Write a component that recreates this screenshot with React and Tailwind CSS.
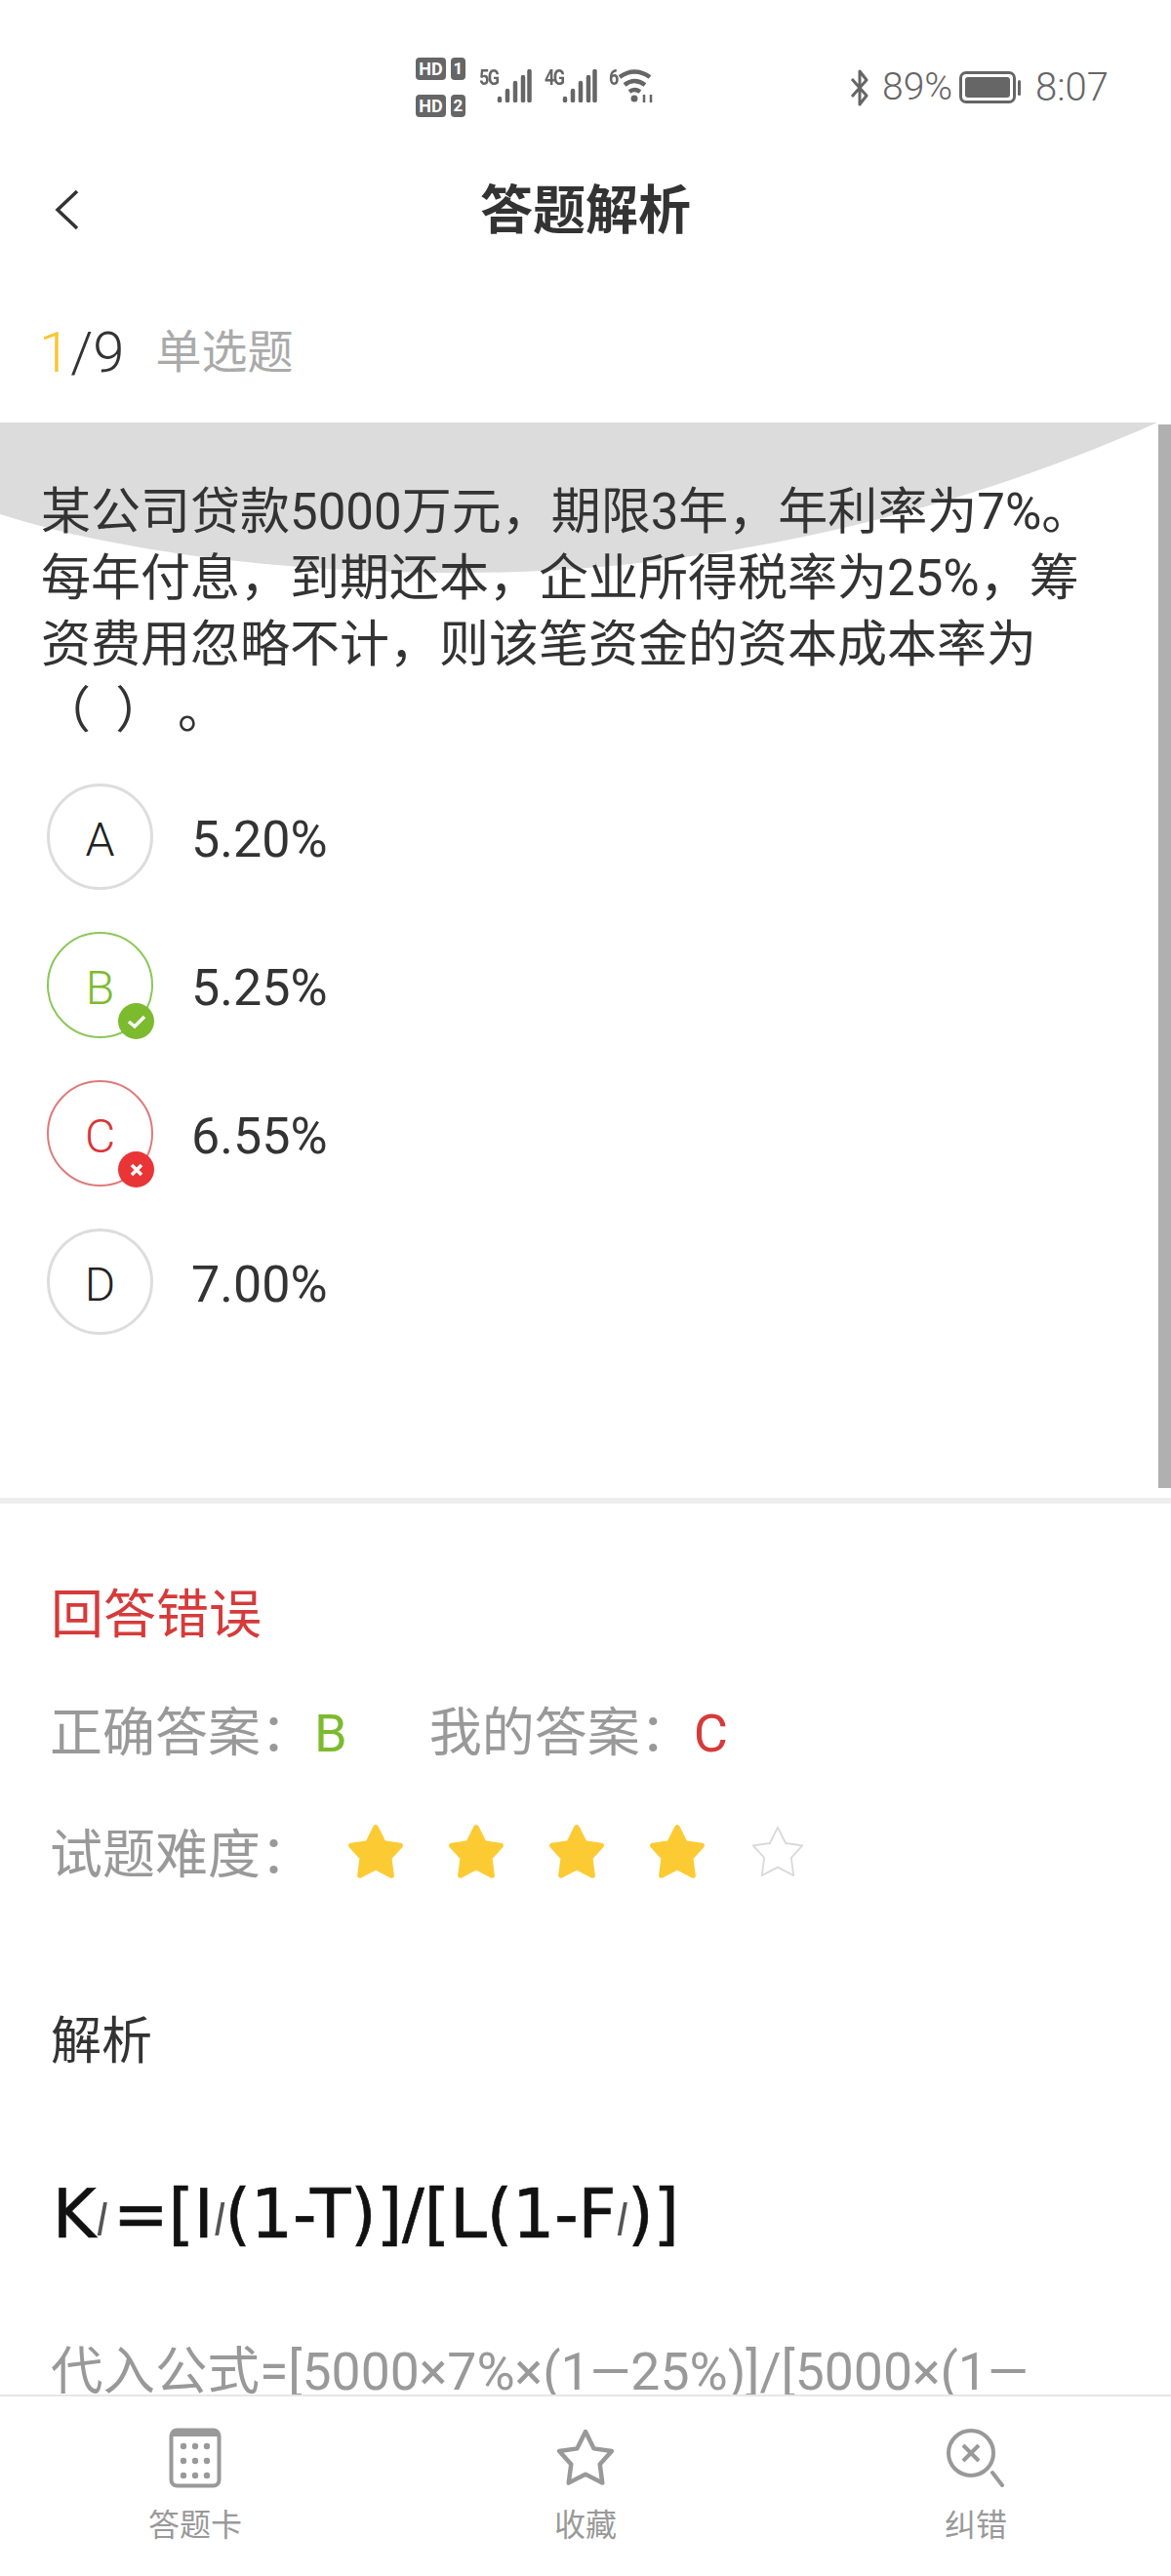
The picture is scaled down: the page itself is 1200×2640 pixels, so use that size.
const CJK = `font-['Roboto','Noto_Sans_CJK_SC',sans-serif]`;

const STAR = "M50 8 L63.5 35 L92 39 L73 60 L77 90 L50 76 L23 90 L27 60 L8 39 L36.5 35 Z";

function Star({ filled }) {
  return (
    <svg width="60" height="60" viewBox="0 0 100 100">
      <path
        d={STAR}
        fill={filled ? "#fccb33" : "#fff"}
        stroke={filled ? "#fccb33" : "#d8d8d8"}
        strokeWidth={filled ? 9 : 3}
        strokeLinejoin="round"
      />
    </svg>
  );
}

function Bars({ w = 36, h = 34 }) {
  return (
    <svg width={w} height={h} viewBox="0 0 36 34">
      <g stroke="#666" strokeWidth="4.5" strokeLinecap="round">
        <path d="M3 30v2" />
        <path d="M11 22v10" />
        <path d="M19 14v18" />
        <path d="M27 8v24" />
        <path d="M33.5 2v30" />
      </g>
    </svg>
  );
}

function HdRow({ n }) {
  return (
    <div className="flex items-center gap-[5px]">
      <span className="w-[31px] h-[23px] rounded-[4px] bg-[#666] text-white text-[18px] font-bold leading-[23px] text-center">HD</span>
      <span className="w-[15px] h-[23px] rounded-[4px] bg-[#666] text-white text-[17px] font-bold leading-[23px] text-center">{n}</span>
    </div>
  );
}

function StatusBar() {
  return (
    <div className="h-[176px] flex items-center pl-[426px] pt-[3px] text-[#666] font-['Roboto',sans-serif]">
      <div className="flex flex-col gap-[15px]">
        <HdRow n="1" />
        <HdRow n="2" />
      </div>
      <div className="flex items-end ml-[14px] mt-[-4px]">
        <span className="text-[18px] font-bold leading-none mb-[17px] w-[18px] tracking-[-1.5px] scale-y-125">5G</span>
        <Bars />
      </div>
      <div className="flex items-end ml-[13px] mt-[-4px]">
        <span className="text-[18px] font-bold leading-none mb-[17px] w-[18px] tracking-[-1.5px] scale-y-125">4G</span>
        <Bars />
      </div>
      <div className="flex items-start ml-[12px] mt-[-4px]">
        <span className="text-[18px] font-bold leading-none w-[10px] scale-y-125">6</span>
        <svg width="38" height="36" viewBox="0 0 38 36" fill="none" stroke="#666" strokeWidth="4.5">
          <path d="M1 9 Q16 -2 32 9" />
          <path d="M6 17 Q16 9 27 17" />
          <path d="M11 24 Q16 20 22 24" />
          <circle cx="16" cy="31" r="3.5" fill="#666" stroke="none" />
          <path d="M26 27v8M33 27v8" strokeWidth="2.5" />
        </svg>
      </div>
      <svg className="ml-[199px]" width="20" height="38" viewBox="0 0 20 38" fill="none" stroke="#666" strokeWidth="3" strokeLinejoin="round">
        <path d="M2 10 L17 27 L10 36 V2 L17 11 L2 28" />
      </svg>
      <span className="ml-[13px] text-[39px] font-light leading-none w-[72px]">89%</span>
      <div className="ml-[7px] w-[58px] h-[33px] rounded-[7px] border-[3px] border-[#666] p-[3px]">
        <div className="w-full h-full rounded-[3px] bg-[#666]" />
      </div>
      <div className="ml-[2px] w-[3px] h-[16px] rounded-full bg-[#666]" />
      <span className="ml-[15px] text-[40px] font-light leading-none">8:07</span>
    </div>
  );
}

function Option({ letter, text, state }) {
  const ring = state === "right" ? "border-[#8cc75a] border-[2px] text-[#7cbb2e]" : state === "wrong" ? "border-[#e07a7a] border-[2px] text-[#d93636]" : "border-[#dddddd] border-[3px] text-[#222]";
  return (
    <div className="flex items-center h-[109px]">
      <div className={`relative w-[109px] h-[109px] rounded-full flex items-center justify-center pt-[6px] text-[48px] font-light ${ring}`}>
        {letter}
        {state === "right" && (
          <span className="absolute right-[-3px] bottom-[-3px] w-[37px] h-[37px] rounded-full bg-[#7cbb2e] flex items-center justify-center">
            <svg width="20" height="16" viewBox="0 0 20 16" fill="none" stroke="#fff" strokeWidth="3.5"><path d="M2 8l6 5L18 3" /></svg>
          </span>
        )}
        {state === "wrong" && (
          <span className="absolute right-[-3px] bottom-[-3px] w-[37px] h-[37px] rounded-full bg-[#e93535] flex items-center justify-center">
            <svg width="14" height="14" viewBox="0 0 14 14" fill="none" stroke="#fff" strokeWidth="3.5"><path d="M2 2l10 10M12 2L2 12" /></svg>
          </span>
        )}
      </div>
      <span className="ml-[39px] pt-[6px] text-[52px] font-normal text-[#333]">{text}</span>
    </div>
  );
}

function Formula() {
  const sub = <i className="text-[44px] font-normal self-end leading-[64px] text-[#555] [-webkit-text-stroke:0px]">l</i>;
  return (
    <div className="flex items-center ml-[2px] h-[78px] text-[70px] leading-none text-[#111] [-webkit-text-stroke:0.7px_#111] font-['DejaVu_Sans',sans-serif] blur-[0.6px] scale-x-[0.965] origin-left">
      <span>K</span>{sub}<span className="ml-[6px]">=[I</span>{sub}<span>(1-T)]/[L(1-F</span>{sub}<span>)]</span>
    </div>
  );
}

function TabLabel({ children }) {
  return <span className="text-[32px] leading-none text-[#999] mt-[22px]">{children}</span>;
}

export default function App() {
  return (
    <div className={`w-[1200px] h-[2640px] bg-white flex flex-col overflow-hidden ${CJK}`}>
      <StatusBar />

      <div className="relative h-[78px] flex items-center justify-center shrink-0">
        <svg className="absolute left-[56px] top-[18px]" width="26" height="42" viewBox="0 0 26 42" fill="none" stroke="#333" strokeWidth="3.5">
          <path d="M23 2L3 21l20 19" />
        </svg>
        <span className="text-[54px] font-bold text-[#333] leading-none mt-[3px]">答题解析</span>
      </div>

      <div className="h-[179px] flex items-center pl-[40px] shrink-0">
        <div className="flex items-center mt-[34px]">
          <span className="text-[58px] font-light text-[#333] leading-none"><span className="text-[#fbc531]">1</span>/9</span>
          <span className="ml-[32px] text-[47px] text-[#aaa] leading-none">单选题</span>
        </div>
      </div>

      <div className="relative flex-1 min-h-0 overflow-hidden">
        <svg className="absolute left-0 top-0" width="1186" height="160" viewBox="0 0 1186 160">
          <path d="M0 0 H1186 C950 105 700 154 475 154 C300 154 130 135 0 94 Z" fill="#dcdcdc" />
        </svg>
        <div className="absolute right-0 top-[2px] w-[13px] h-[1090px] bg-[#b0b0b0]" />

        <div className="relative pt-[58px]">
          <p className="px-[42px] text-[51px] leading-[68px] text-[#333] whitespace-nowrap">
            某公司贷款5000万元，期限3年，年利率为7%。<br />
            每年付息，到期还本，企业所得税率为25%，筹<br />
            资费用忽略不计，则该笔资金的资本成本率为<br />
            （&nbsp;&nbsp;）&nbsp;。
          </p>

          <div className="mt-[40px] pl-[48px] flex flex-col gap-[43px]">
            <Option letter="A" text="5.20%" />
            <Option letter="B" text="5.25%" state="right" />
            <Option letter="C" text="6.55%" state="wrong" />
            <Option letter="D" text="7.00%" />
          </div>

          <div className="mt-[167px] h-[6px] bg-[#eeeeee]" />

          <div className="pl-[52px]">
            <div className="mt-[83px] text-[54px] leading-[64px] text-[#d63a3a]">回答错误</div>

            <div className="mt-[57px] flex items-center text-[54px] leading-[64px] text-[#999]">
              <span className="-ml-[1px]">正确答案：</span>
              <span className="text-[#7cbb2e] ml-[1px]">B</span>
              <span className="ml-[84px]">我的答案：</span>
              <span className="text-[#d63a3a] ml-[1px]">C</span>
            </div>

            <div className="mt-[61px] flex items-center text-[54px] leading-[64px] text-[#999]">
              <span className="w-[304px] -ml-[1px]">试题难度：</span>
              <div className="flex gap-[43px] mt-[-8px]">
                <Star filled />
                <Star filled />
                <Star filled />
                <Star filled />
                <Star />
              </div>
            </div>

            <div className="mt-[127px] text-[52px] leading-[64px] text-[#333]">解析</div>

            <div className="mt-[105px]">
              <Formula />
            </div>

            <div className="mt-[91px] text-[53.5px] leading-[64px] text-[#999] whitespace-nowrap">代入公式=[5000×7%×(1—25%)]/[5000×(1—</div>
          </div>
        </div>
      </div>

      <div className="h-[186px] shrink-0 border-t-[2px] border-[#e6e6e6] bg-white grid grid-cols-3">
        <div className="flex flex-col items-center pt-[32px]">
          <svg width="54" height="62" viewBox="0 0 54 62" fill="none">
            <rect x="2.5" y="2.5" width="49" height="57" rx="6" stroke="#999" strokeWidth="4" />
            <path d="M4 4h46v5H4z" fill="#999" />
            <g fill="#999">
              {[19, 34, 49].map((y) => [15, 27, 39].map((x) => <circle key={`${x}-${y}`} cx={x} cy={y} r="3.2" />))}
            </g>
          </svg>
          <TabLabel>答题卡</TabLabel>
        </div>
        <div className="flex flex-col items-center pt-[32px]">
          <svg width="66" height="64" viewBox="0 0 100 100" fill="none" className="-mt-[1px] -mb-[1px]">
            <path d={STAR} stroke="#999" strokeWidth="7" strokeLinejoin="round" />
          </svg>
          <TabLabel>收藏</TabLabel>
        </div>
        <div className="flex flex-col items-center pt-[32px]">
          <svg width="62" height="62" viewBox="0 0 62 62" fill="none" stroke="#999">
            <circle cx="26" cy="26" r="23" strokeWidth="4" />
            <path d="M18 18l16 16M34 18L18 34" strokeWidth="4" />
            <path d="M48 46l10 13" strokeWidth="4" strokeLinecap="round" />
          </svg>
          <TabLabel>纠错</TabLabel>
        </div>
      </div>
    </div>
  );
}
